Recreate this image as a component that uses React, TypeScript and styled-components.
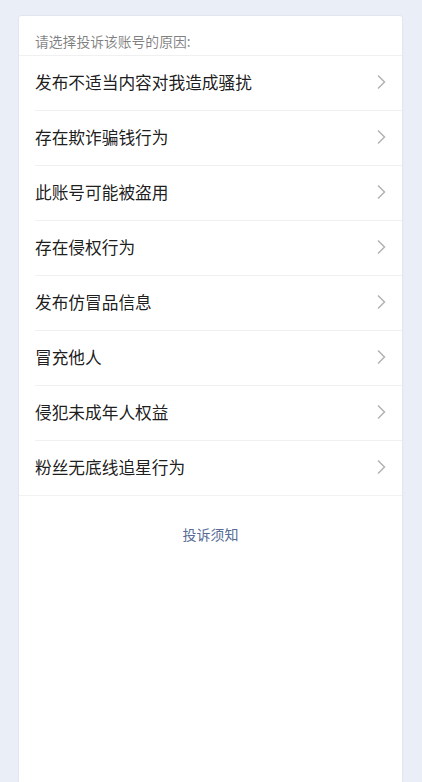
import React from 'react';
import styled, { createGlobalStyle } from 'styled-components';

const GlobalStyle = createGlobalStyle`
  html, body {
    margin: 0;
    padding: 0;
    background: #eaeef7;
    font-family: "Noto Sans CJK SC", "Noto Sans", sans-serif;
    -webkit-font-smoothing: antialiased;
  }
`;

const Page = styled.div`
  padding: 16px 20px 0 19px;
  min-height: 100vh;
  box-sizing: border-box;
`;

const Card = styled.div`
  background: #fff;
  min-height: calc(100vh - 16px);
  box-shadow: 0 0 2px rgba(0, 0, 0, 0.12);
  border-radius: 2px 2px 0 0;
`;

const Header = styled.div`
  padding: 18px 16px 6px;
  font-size: 13.8px;
  line-height: 15px;
  color: rgba(0, 0, 0, 0.5);
  border-bottom: 1px solid #f0f0f0;
`;

const List = styled.div`
  border-bottom: 1px solid #f2f2f2;
`;

const Row = styled.div<{ $last?: boolean }>`
  box-sizing: border-box;
  margin-left: 16px;
  height: ${(p) => (p.$last ? '54px' : '55px')};
  display: flex;
  align-items: center;
  justify-content: space-between;
  padding: 0 16px 3px 0;
  border-bottom: ${(p) => (p.$last ? 'none' : '1px solid #f0f0f0')};
  font-size: 16.7px;
  color: rgba(0, 0, 0, 0.9);
`;

const Arrow = styled.svg`
  width: 10px;
  height: 16px;
  flex-shrink: 0;
`;

const Notice = styled.div`
  text-align: center;
  padding-top: 28px;
  font-size: 14px;
  color: #576b95;
`;

const reasons = [
  '发布不适当内容对我造成骚扰',
  '存在欺诈骗钱行为',
  '此账号可能被盗用',
  '存在侵权行为',
  '发布仿冒品信息',
  '冒充他人',
  '侵犯未成年人权益',
  '粉丝无底线追星行为',
];

const App: React.FC = () => {
  return (
    <>
      <GlobalStyle />
      <Page>
        <Card>
          <Header>请选择投诉该账号的原因:</Header>
          <List>
            {reasons.map((r, i) => (
              <Row key={r} $last={i === reasons.length - 1}>
                <span>{r}</span>
                <Arrow viewBox="0 0 10 16">
                  <path d="M2 1.5 L8.5 8 L2 14.5" fill="none" stroke="rgba(0,0,0,0.3)" strokeWidth="1.5" />
                </Arrow>
              </Row>
            ))}
          </List>
          <Notice>投诉须知</Notice>
        </Card>
      </Page>
    </>
  );
};

export default App;
